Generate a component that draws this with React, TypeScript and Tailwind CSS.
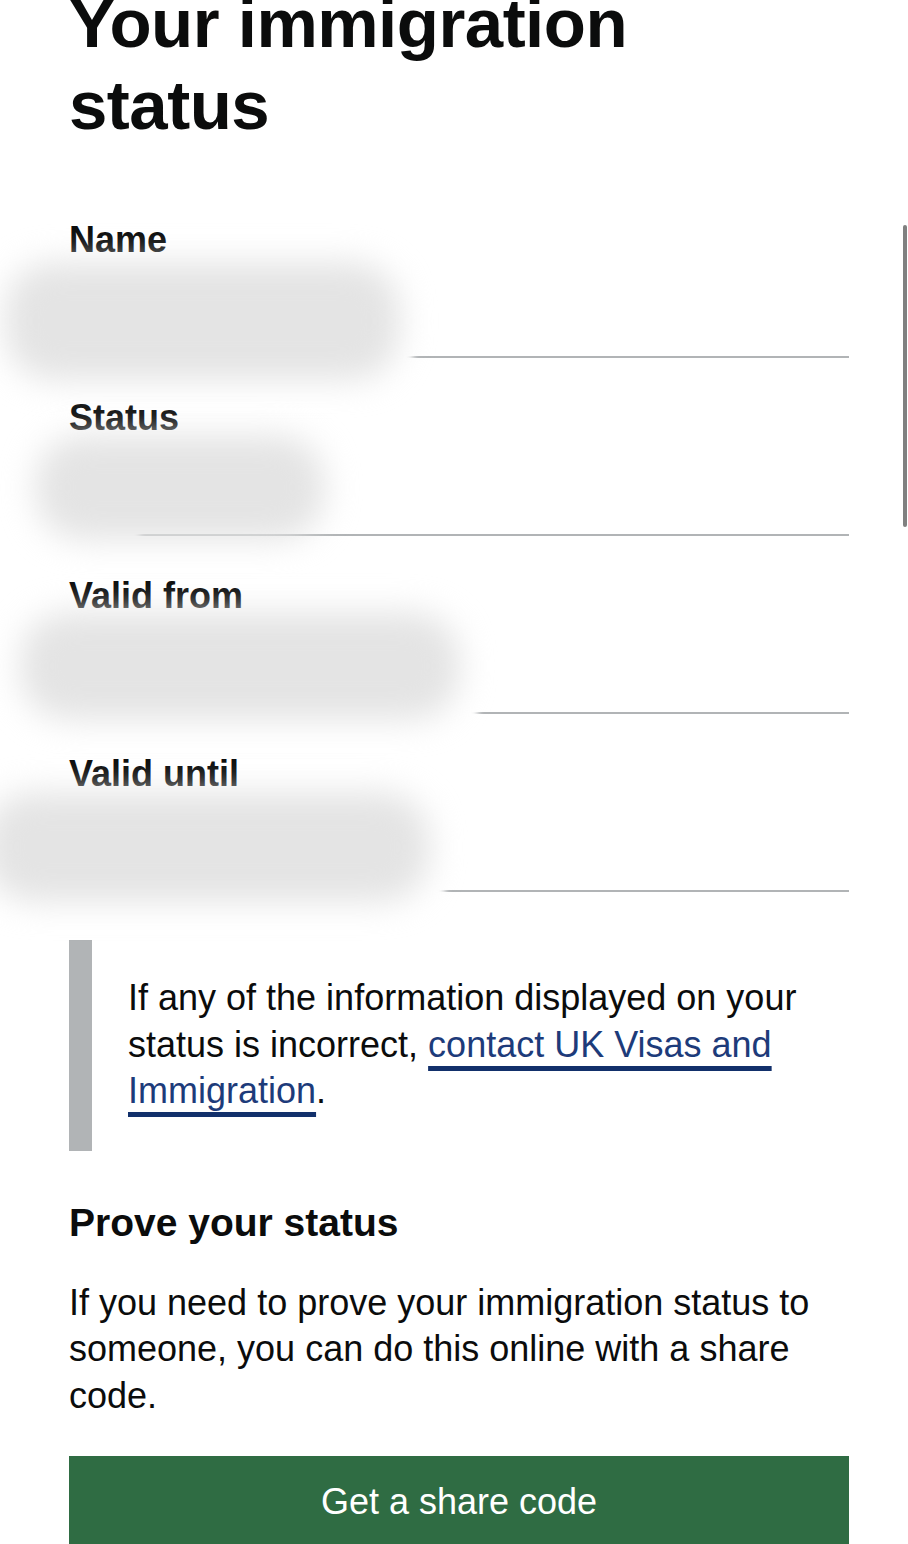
import React from "react";

const rows = ["Name", "Status", "Valid from", "Valid until"];

// redacted areas: white patch hiding the rule, soft grey smudge on top
const smudges = [
  { cover: "left-0 top-[345px] h-[25px] w-[413px]", blob: "left-[5px] top-[262px] h-[118px] w-[395px]" },
  { cover: "left-0 top-[525px] h-[22px] w-[140px]", blob: "left-[35px] top-[435px] h-[105px] w-[290px]" },
  { cover: "left-0 top-[703px] h-[24px] w-[478px]", blob: "left-[20px] top-[612px] h-[108px] w-[440px]" },
  { cover: "left-0 top-[881px] h-[24px] w-[445px]", blob: "left-[-15px] top-[792px] h-[110px] w-[445px]" },
];

export default function App() {
  return (
    <div
      className="relative min-h-screen overflow-hidden bg-white text-[#0b0c0c]"
      style={{ fontFamily: "'Liberation Sans', Arial, sans-serif" }}
    >
      <main className="flex flex-col pl-[69px] pr-[59px]">
        <h1 className="-mt-[17px] max-w-[640px] text-[69px] font-bold leading-[82px] tracking-[-0.5px]">
          Your immigration status
        </h1>

        {/* summary list */}
        <dl className="mt-[73px] flex flex-col gap-[40px]">
          {rows.map((label) => (
            <div key={label} className="flex flex-col border-b-2 border-[#b1b4b6]">
              <dt className="text-[36px] font-bold leading-[40px]">{label}</dt>
              <dd className="h-[96px]" />
            </div>
          ))}
        </dl>

        {/* inset text */}
        <div className="mt-[48px] border-l-[23px] border-[#b1b4b6] pl-[36px] pt-[35px] pb-[36px] text-[36px] leading-[46.5px]">
          If any of the information displayed on your status is incorrect,{" "}
          <a
            href="#"
            className="text-[#1d3b7a] underline decoration-[#12306b] decoration-[5px] underline-offset-[9px]"
          >
            contact UK Visas and Immigration
          </a>
          .
        </div>

        <h2 className="mt-[49px] text-[39px] font-bold leading-[45px]">
          Prove your status
        </h2>
        <p className="mt-[35px] text-[36px] leading-[46.5px]">
          If you need to prove your immigration status to someone, you can do
          this online with a share code.
        </p>

        <button className="mt-[37px] w-full bg-[#2f6c43] pt-[24px] pb-[30px] text-center text-[36px] leading-[44px] text-white">
          Get a share code
        </button>
      </main>

      {smudges.map((s, i) => (
        <React.Fragment key={i}>
          <div className={`pointer-events-none absolute bg-white blur-[3px] ${s.cover}`} />
          <div className={`pointer-events-none absolute rounded-[48px] bg-[#e4e4e4] blur-[16px] ${s.blob}`} />
        </React.Fragment>
      ))}

      {/* scroll indicator */}
      <div className="absolute right-[1px] top-[225px] h-[302px] w-[4px] rounded-full bg-[#808080]" />
    </div>
  );
}
